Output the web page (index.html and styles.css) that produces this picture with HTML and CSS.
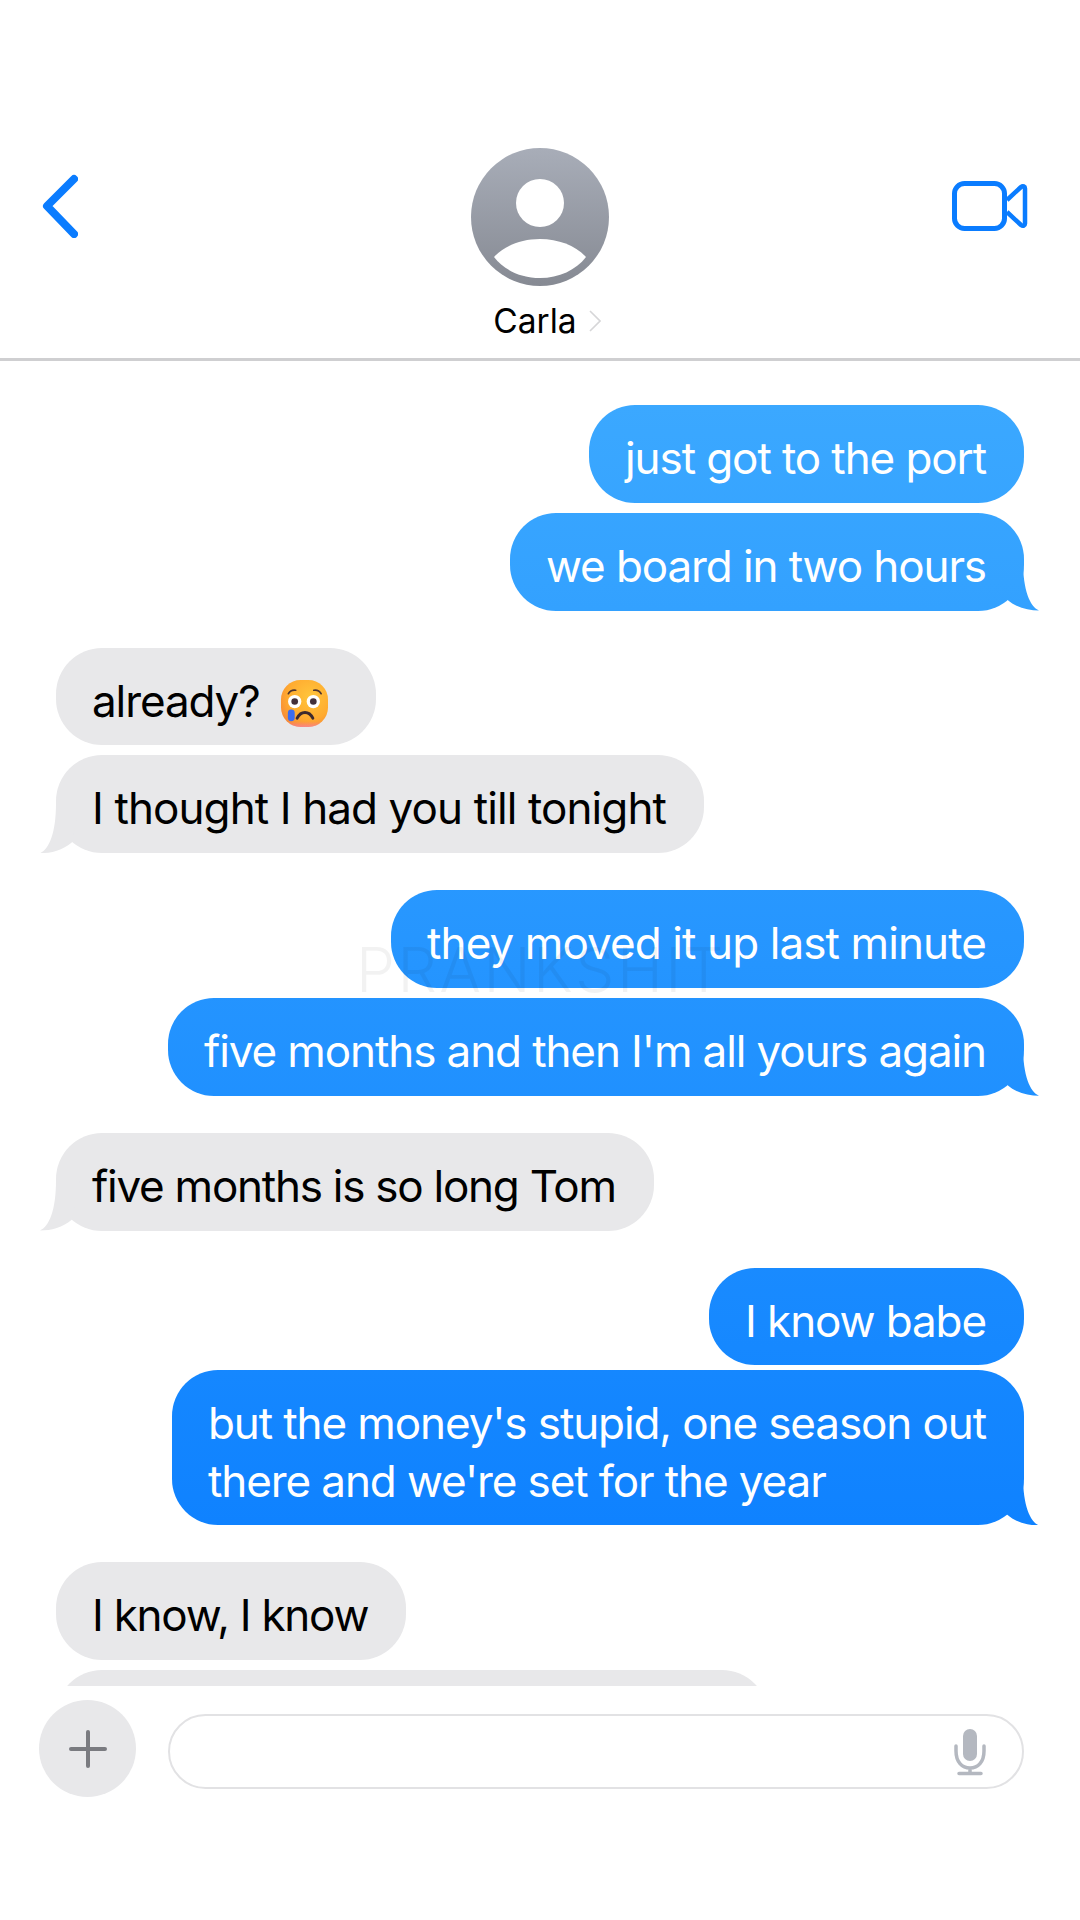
FILE: index.html
```html
<!DOCTYPE html>
<html lang="en">
<head>
<meta charset="utf-8">
<title>Carla</title>
<link rel="stylesheet" href="styles.css">
</head>
<body>
<div class="phone">
  <header class="nav">
    <div class="nav-row">
      <svg class="back" viewBox="0 0 36 64"><path d="M32 5 5 32l27 28" fill="none" stroke="#0a7cff" stroke-width="8" stroke-linecap="round" stroke-linejoin="round"/></svg>
      <div class="contact">
        <svg class="avatar" viewBox="0 0 138 138">
          <defs><linearGradient id="av" x1="0" y1="0" x2="0" y2="1"><stop offset="0" stop-color="#a8adb8"/><stop offset="1" stop-color="#868a93"/></linearGradient></defs>
          <circle cx="69" cy="69" r="69" fill="url(#av)"/>
          <circle cx="69" cy="55" r="24" fill="#fff"/>
          <path d="M23 109C33 98 50 91 69 91s36 7 46 18c-10 13-27 21-46 21s-36-8-46-21z" fill="#fff"/>
        </svg>
        <div class="name"><span>Carla</span><svg class="chev" viewBox="0 0 12 22"><path d="M1 1 11 11 1 21" fill="none" stroke="#d6d6d8" stroke-width="1.600"/></svg></div>
      </div>
      <svg class="video" viewBox="0 0 77 52"><rect x="3.500" y="3.500" width="50" height="45" rx="10" fill="none" stroke="#0a7cff" stroke-width="5"/><path d="M56 20 70 7C72 5.500 74 6.500 74 8.500V43.500C74 45.500 72 46.500 70 45L56 32" fill="none" stroke="#0a7cff" stroke-width="4.500" stroke-linejoin="round"/></svg>
    </div>
  </header>
  <main class="thread">
    <div class="group">
      <div class="bubble me">just got to the port</div>
      <div class="bubble me tail">we board in two hours</div>
    </div>
    <div class="group">
      <div class="bubble them with-emoji">already?<svg class="emoji" viewBox="0 0 48 48">
        <defs><radialGradient id="face" cx=".62" cy=".35" r=".8"><stop offset="0" stop-color="#ffc53c"/><stop offset=".6" stop-color="#ffab30"/><stop offset="1" stop-color="#f5803a"/></radialGradient><linearGradient id="chin" x1="0" y1="0" x2="0" y2="1"><stop offset=".88" stop-color="#ff6fb0" stop-opacity="0"/><stop offset="1" stop-color="#f77fc0" stop-opacity=".6"/></linearGradient></defs>
        <rect x="0" y="0" width="48" height="48" rx="20" fill="url(#face)"/><rect x="0" y="0" width="48" height="48" rx="20" fill="url(#chin)"/>
        <circle cx="14" cy="22" r="6.800" fill="#fff"/><circle cx="33" cy="22" r="6.800" fill="#fff"/>
        <circle cx="14" cy="22" r="3.400" fill="#43303a"/><circle cx="33" cy="22" r="3.400" fill="#43303a"/>
        <path d="M7.500 14C9 11.500 12 10 15 10.500M41 14C39.500 11.500 36.500 10 33.500 10.500" fill="none" stroke="#4e3430" stroke-width="1.700" stroke-linecap="round"/>
        <path d="M16.500 39c2-4 4.500-5.800 8-5.800s6 1.800 8 5.800" fill="none" stroke="#3e2a2e" stroke-width="3" stroke-linecap="round"/>
        <rect x="7" y="30" width="7" height="12" rx="3.500" fill="#3c6cf0"/>
      </svg></div>
      <div class="bubble them tail loose">I thought I had you till tonight</div>
    </div>
    <div class="group">
      <div class="bubble me loose">they moved it up last minute</div>
      <div class="bubble me tail">five months and then I'm all yours again</div>
    </div>
    <div class="group">
      <div class="bubble them tail tighter">five months is so long Tom</div>
    </div>
    <div class="group tight">
      <div class="bubble me">I know babe</div>
      <div class="bubble me tail">but the money's stupid, one season out<br>there and we're set for the year</div>
    </div>
    <div class="group">
      <div class="bubble them tighter">I know, I know</div>
      <div class="bubble them clipped"></div>
    </div>
  </main>
  <footer class="composer">
    <div class="plus"><svg viewBox="0 0 38 38"><path d="M19 2v34M2 19h34" stroke="#7a7b80" stroke-width="4" stroke-linecap="round"/></svg></div>
    <div class="field"><svg class="mic" viewBox="0 0 34 48"><rect x="10" y="1" width="14" height="32" rx="7" fill="#b4b8c0"/><path d="M3 18v5c0 11 6 17 14 17s14-6 14-17v-5M17 40v5M6 45.500h22" fill="none" stroke="#b4b8c0" stroke-width="3.500" stroke-linecap="round"/></svg></div>
  </footer>
  <div class="watermark">PRANKSHIT</div>
</div>
</body>
</html>
```
FILE: styles.css
```css
* { box-sizing: border-box; }
html, body { margin: 0; background: #fff; }
.phone {
  position: relative;
  width: 1080px;
  height: 1920px;
  overflow: hidden;
  display: flex;
  flex-direction: column;
  font-family: Inter, "Liberation Sans", sans-serif;
  background: #fff;
}
.nav {
  height: 361px;
  padding-top: 148px;
  border-bottom: 3px solid #cfcfd1;
  flex: none;
}
.nav-row {
  display: grid;
  grid-template-columns: 1fr auto 1fr;
  padding: 0 52px;
  align-items: start;
}
.back { width: 36px; height: 64px; margin-top: 26px; margin-left: -10px; }
.video { width: 77px; height: 52px; margin-top: 32px; justify-self: end; }
.contact { display: flex; flex-direction: column; align-items: center; }
.avatar { width: 138px; height: 138px; display: block; }
.name {
  display: flex;
  align-items: center;
  gap: 12px;
  margin-top: 14px;
  margin-left: 14px;
  font-size: 33.500px;
  line-height: 42px;
  color: #000;
}
.chev { width: 12px; height: 22px; }
.thread {
  flex: 1;
  min-height: 0;
  overflow: hidden;
  padding: 44px 56px 0;
  display: flex;
  flex-direction: column;
  gap: 37px;
  font-size: 44px;
  line-height: 57.800px;
  letter-spacing: -1.100px;
}
.group { display: flex; flex-direction: column; gap: 10px; flex: none; }
.group.tight { gap: 4.500px; }
.bubble {
  position: relative;
  padding: 25px 38px 15px 36px;
  border-radius: 46px;
  width: fit-content;
  white-space: nowrap;
}
.bubble.me {
  align-self: flex-end;
  color: #fff;
  background: linear-gradient(180deg, #45afff 0, #3ba8ff 405px, #0f82ff 1524px, #0f82ff 100%) fixed;
}
.bubble.them { align-self: flex-start; color: #000; background-color: #e8e8ea; }
.bubble.with-emoji { padding-right: 48px; }
.bubble.loose { letter-spacing: -0.900px; }
.bubble.tighter { letter-spacing: -1.250px; }
.bubble.tail::after {
  content: "";
  position: absolute;
  bottom: 0;
  width: 40px;
  height: 50px;
}
.bubble.me.tail::after {
  right: -15px;
  background: inherit;
  background-attachment: fixed;
  clip-path: path("M24 0C24 30 31 46 40 50C29 50 17 47 8 39L0 0Z");
}
.bubble.them.tail::after {
  left: -16px;
  background: #e8e8ea;
  clip-path: path("M16 0C16 30 9 46 0 50C11 50 23 47 32 39L40 0Z");
}
.clipped { width: 712px; height: 98px; }
.emoji { width: 47px; height: 47px; margin-left: 21px; vertical-align: -10px; }
.composer {
  flex: none;
  height: 234px;
  padding: 14px 56px 0 39px;
  display: flex;
  align-items: flex-start;
  gap: 32px;
}
.plus {
  flex: none;
  width: 97px;
  height: 97px;
  border-radius: 50%;
  background: #e8e8ea;
  display: flex;
  align-items: center;
  justify-content: center;
}
.plus svg { width: 38px; height: 38px; }
.field {
  flex: 1;
  height: 75px;
  margin-top: 14px;
  border: 2.500px solid #e2e2e4;
  border-radius: 38px;
  display: flex;
  align-items: center;
  justify-content: flex-end;
  padding-right: 35px;
}
.mic { width: 34px; height: 48px; }
.watermark {
  position: absolute;
  left: 356px;
  top: 934px;
  font-size: 62px;
  line-height: 72px;
  font-weight: 300;
  color: rgba(0, 0, 0, .05);
  letter-spacing: 2.500px;
  pointer-events: none;
}
```
